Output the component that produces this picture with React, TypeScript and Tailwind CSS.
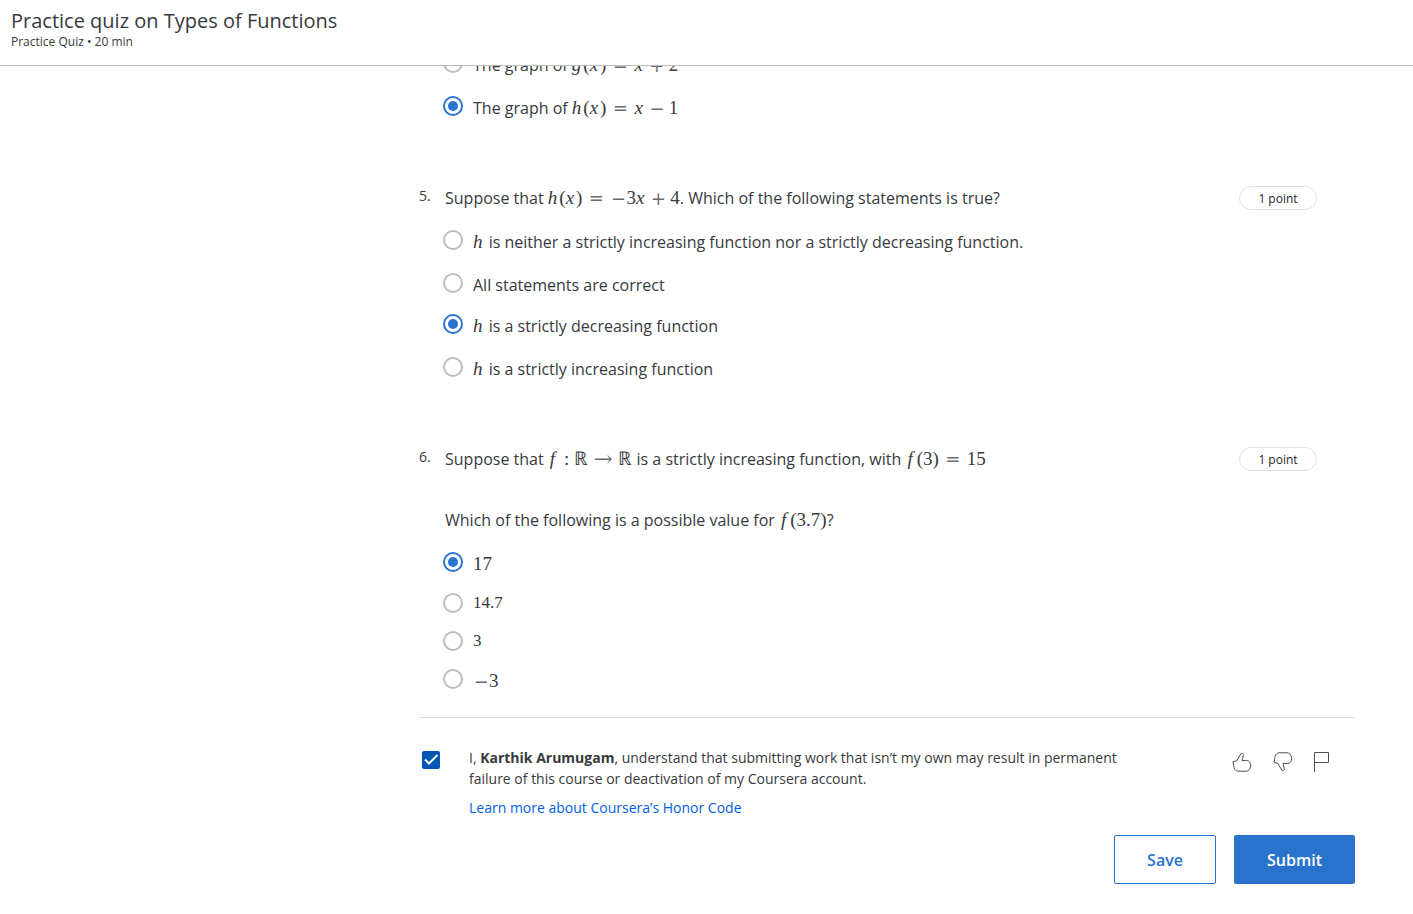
import type { ReactNode } from 'react';

const V = ({ children }: { children: ReactNode }) => <i className="pr-0.5">{children}</i>;
const F = () => <i className="pl-0.5 pr-1">f</i>;
const symbol = "inline-block text-center font-['DejaVu_Math_TeX_Gyre','DejaVu_Serif',serif] leading-none opacity-75";
const Rel = ({ children }: { children: ReactNode }) => (
  <span className={`${symbol} mx-1.5 w-4 text-[18px]`}>{children}</span>
);
const Arrow = () => <span className={`${symbol} mx-1 w-[22px] text-[20px]`}>→</span>;
const Bin = ({ children }: { children: ReactNode }) => (
  <span className={`${symbol} mx-1 w-4 text-[18px]`}>{children}</span>
);
const Neg = () => <span className={`${symbol} w-4 text-[18px]`}>−</span>;

function Formula({ children, small }: { children: ReactNode; small?: boolean }) {
  const size = small ? 'text-[17px]' : 'text-[19px]';
  return <span className={`whitespace-nowrap font-['Liberation_Serif',serif] leading-none ${size}`}>{children}</span>;
}

type Choice = { content: ReactNode; checked?: boolean; row: string };

function Choices({ name, items }: { name: string; items: Choice[] }) {
  return (
    <div role="radiogroup" aria-label={name}>
      {items.map((item, i) => (
        <label key={i} className={`flex items-start ${item.row}`}>
          <input
            type="radio"
            name={name}
            defaultChecked={item.checked}
            className="mr-2.5 flex size-5 shrink-0 appearance-none items-center justify-center rounded-full border-2 border-[#bdbdbd] before:size-2.5 before:rounded-full checked:border-[#2a73cc] checked:before:bg-[#2a73cc]"
          />
          <span>{item.content}</span>
        </label>
      ))}
    </div>
  );
}

function Question({ number, prompt, children }: { number: number; prompt: ReactNode; children: ReactNode }) {
  return (
    <section className="flex items-start">
      <span className="w-6 shrink-0 text-sm">{number}.</span>
      <div className="min-w-0 grow">
        <div className="mb-5 flex items-start justify-between">
          <div className="pl-0.5">{prompt}</div>
          <span className="mr-[38px] flex h-6 w-[78px] shrink-0 items-center justify-center rounded-full border border-[#e1e1e1] pt-0.5 text-xs text-[#1f1f1f]">
            1 point
          </span>
        </div>
        {children}
      </div>
    </section>
  );
}

const thumb =
  'M1 9.5 4.5 9 9 1.5C10 .8 11.7 1.6 11.3 3.5L10 8.5H14.5C17 8.5 18.7 10.6 18.7 13.5 18.5 17 16.5 19.2 14 19.2H6C3 19 1.7 16 1.7 13.5Z';

export default function App() {
  return (
    <div className="min-h-screen bg-white font-['Open_Sans',sans-serif] text-base leading-6 text-[#373a3c]">
      <header className="sticky top-0 z-10 h-[66px] border-b border-[#bdbdbd] bg-white px-[11px] pt-2">
        <h1 className="text-xl leading-[26px]">Practice quiz on Types of Functions</h1>
        <p className="text-xs leading-4">Practice Quiz • 20 min</p>
      </header>

      <main className="-mt-[13px] ml-[419px] mr-[58px]">
        <div className="mb-[47px] ml-6">
          <Choices
            name="Question 4"
            items={[
              {
                row: 'min-h-[43px]',
                content: <>The graph of <Formula><V>g</V>(<V>x</V>)<Rel>=</Rel><V>x</V><Bin>+</Bin>2</Formula></>,
              },
              {
                row: 'min-h-[43px]',
                checked: true,
                content: <>The graph of <Formula><V>h</V>(<V>x</V>)<Rel>=</Rel><V>x</V><Bin>−</Bin>1</Formula></>,
              },
            ]}
          />
        </div>

        <div className="mb-[47px]">
          <Question
            number={5}
            prompt={
              <>
                Suppose that <Formula><V>h</V>(<V>x</V>)<Rel>=</Rel><Neg />3<V>x</V><Bin>+</Bin>4</Formula>. Which of
                the following statements is true?
              </>
            }
          >
            <Choices
              name="Question 5"
              items={[
                {
                  row: 'min-h-[43px]',
                  content: <><Formula><V>h</V></Formula> is neither a strictly increasing function nor a strictly decreasing function.</>,
                },
                { row: 'min-h-[41px]', content: 'All statements are correct' },
                { row: 'min-h-[43px]', checked: true, content: <><Formula><V>h</V></Formula> is a strictly decreasing function</> },
                { row: 'min-h-[43px]', content: <><Formula><V>h</V></Formula> is a strictly increasing function</> },
              ]}
            />
          </Question>
        </div>

        <Question
          number={6}
          prompt={
            <>
              <p>
                Suppose that <Formula><F /><span className="px-[5px]">:</span>ℝ<Arrow />ℝ</Formula> is a strictly
                increasing function, with <Formula><F />(3)<Rel>=</Rel>15</Formula>
              </p>
              <p className="mt-[37px]">
                Which of the following is a possible value for <Formula><F />(3.7)</Formula>?
              </p>
            </>
          }
        >
          <Choices
            name="Question 6"
            items={[
              { row: 'min-h-[41px]', checked: true, content: <Formula>17</Formula> },
              { row: 'min-h-[38px] leading-[18px]', content: <Formula small>14.7</Formula> },
              { row: 'min-h-[38px] leading-[18px]', content: <Formula small>3</Formula> },
              { row: 'min-h-[48px]', content: <Formula><Neg />3</Formula> },
            ]}
          />
        </Question>

        <footer className="border-t border-[#e1e1e1] pt-[29px]">
          <div className="flex items-start text-sm leading-[21px]">
            <div className="relative ml-[3px] mt-1 size-[18px] shrink-0">
              <input
                id="honor"
                type="checkbox"
                defaultChecked
                className="peer block size-[18px] appearance-none rounded-xs border-2 border-[#0056b3] checked:bg-[#0056b3]"
              />
              <svg
                viewBox="0 0 18 18"
                className="pointer-events-none absolute inset-0 hidden size-[18px] peer-checked:block"
                fill="none"
                stroke="white"
                strokeWidth="2"
              >
                <path d="M3 8.5 7 12.5 15.5 4" />
              </svg>
            </div>
            <div className="ml-[29px] w-[660px]">
              <label htmlFor="honor" className="block">
                I, <b>Karthik Arumugam</b>
                <span>, understand that submitting work that isn’t my own may result in permanent</span>{' '}
                <span>failure of this course or deactivation of my Coursera account.</span>
              </label>
              <a href="#honor-code" className="mt-2 block text-[#0062e4]">
                Learn more about Coursera’s Honor Code
              </a>
            </div>
            <div className="ml-auto mr-[23px] mt-[5px] flex items-center text-[#4b5157]">
              <button type="button" aria-label="Like" className="mr-[21px]">
                <svg viewBox="0 0 20 20" className="block size-5" fill="none" stroke="currentColor">
                  <path d={thumb} />
                </svg>
              </button>
              <button type="button" aria-label="Dislike" className="mr-[19px]">
                <svg viewBox="0 0 20 20" className="block size-5" fill="none" stroke="currentColor">
                  <path transform="matrix(1 0 0 -1 0 20)" d={thumb} />
                </svg>
              </button>
              <button type="button" aria-label="Report">
                <svg viewBox="0 0 20 20" className="block size-5" fill="none" stroke="currentColor">
                  <path d="M2.5 20V.5H16.5V10.5H2.5" />
                </svg>
              </button>
            </div>
          </div>
          <div className="mt-[17px] flex justify-end gap-[18px] pb-[30px] font-semibold">
            <button type="button" className="h-[49px] w-[102px] rounded-xs border border-[#2a73cc] text-[#2a73cc]">
              Save
            </button>
            <button type="button" className="h-[49px] w-[121px] rounded-xs bg-[#2a73cc] text-white">
              Submit
            </button>
          </div>
        </footer>
      </main>
    </div>
  );
}
